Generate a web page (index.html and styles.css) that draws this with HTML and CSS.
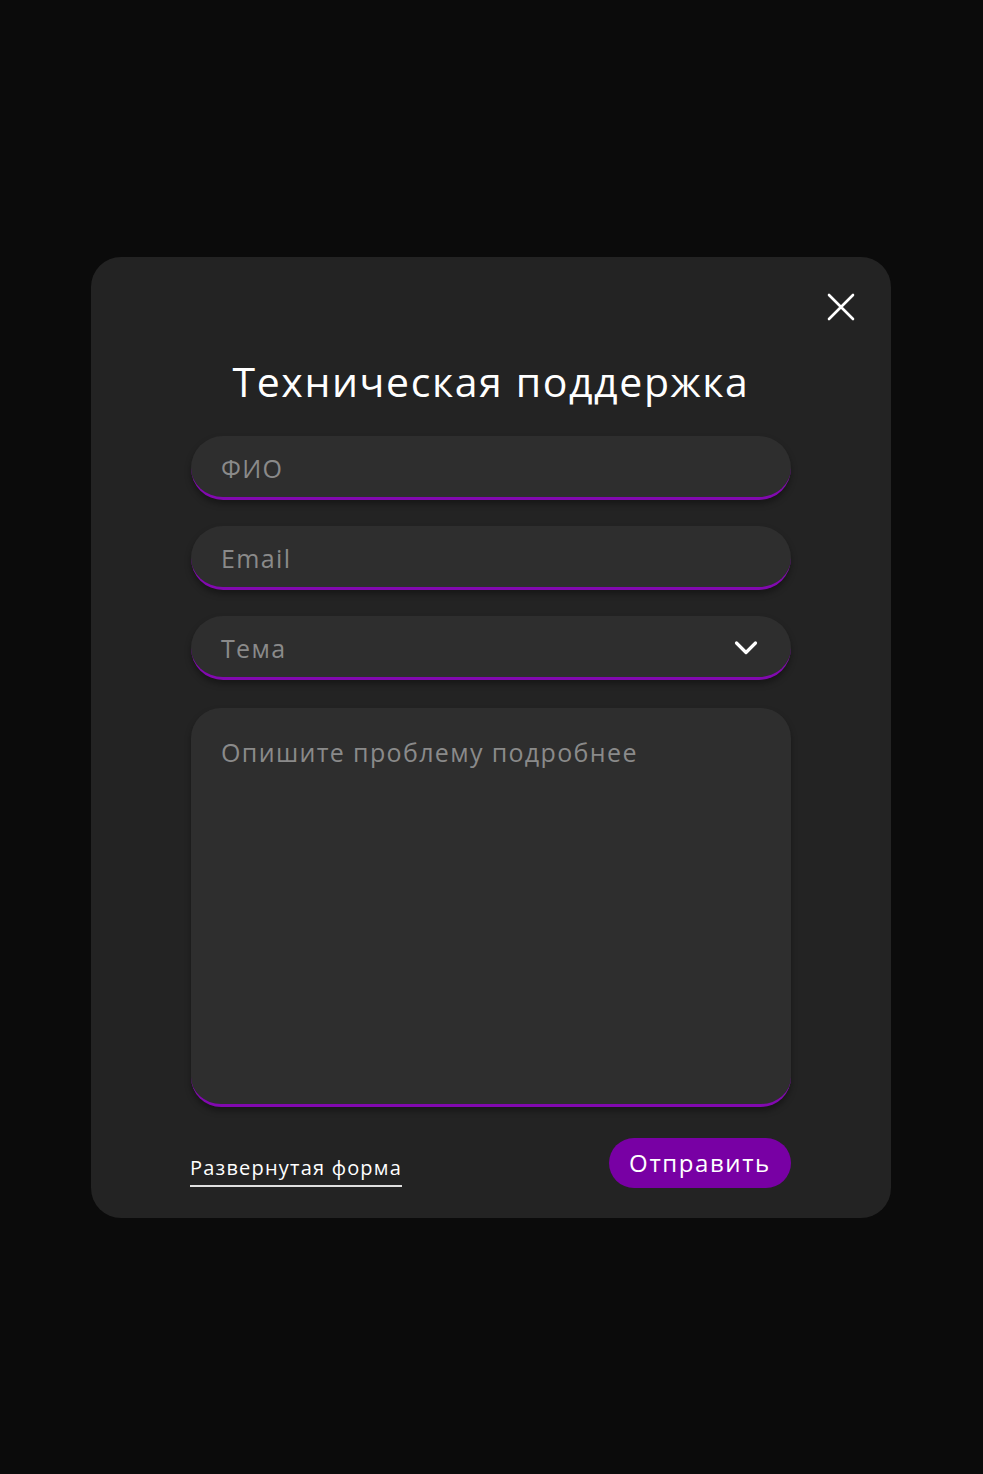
FILE: index.html
```html
<!DOCTYPE html>
<html lang="ru">
<head>
<meta charset="utf-8">
<link rel="stylesheet" href="styles.css">
</head>
<body>
<div class="card">
  <button class="close" aria-label="Закрыть">
    <svg width="28" height="28" viewBox="0 0 28 28"><path d="M2 2 L26 26 M26 2 L2 26" stroke="#fff" stroke-width="2.6" stroke-linecap="round" fill="none"/></svg>
  </button>
  <h1 class="title">Техническая поддержка</h1>
  <div class="form">
    <div class="field"><span class="ph">ФИО</span></div>
    <div class="field"><span class="ph">Email</span></div>
    <div class="field select"><span class="ph">Тема</span>
      <svg class="chev" width="24" height="16" viewBox="0 0 24 16"><path d="M2.5 3 L12 12.5 L21.5 3" stroke="#fff" stroke-width="3.2" stroke-linecap="round" stroke-linejoin="round" fill="none"/></svg>
    </div>
    <div class="field area"><span class="ph">Опишите проблему подробнее</span></div>
  </div>
  <div class="footer">
    <a class="link">Развернутая форма</a>
    <button class="send">Отправить</button>
  </div>
</div>
</body>
</html>
```
FILE: styles.css
```css
* { box-sizing: border-box; }
html, body { margin: 0; padding: 0; }
body {
  background: #0b0b0b;
  width: 983px;
  height: 1474px;
  font-family: "Open Sans", "Noto Sans", sans-serif;
  padding-top: 257px;
  padding-left: 91px;
}
.card {
  position: relative;
  width: 800px;
  height: 961px;
  background: #232323;
  border-radius: 30px;
  padding: 91px 100px 30px 100px;
  display: flex;
  flex-direction: column;
}
.close {
  position: absolute;
  top: 36px;
  right: 36px;
  width: 28px;
  height: 28px;
  padding: 0;
  border: 0;
  background: none;
  display: flex;
}
.title {
  margin: 0 -60px 22px;
  font-weight: 400;
  font-size: 41px;
  line-height: 66px;
  letter-spacing: 1.6px;
  text-align: center;
  color: #fff;
  white-space: nowrap;
}
.form {
  display: flex;
  flex-direction: column;
  gap: 26px;
}
.field {
  height: 64px;
  background: #2e2e2e;
  border-radius: 32px;
  border-bottom: 3px solid #8209b0;
  box-shadow: 0 4px 6px rgba(0, 0, 0, 0.35);
  padding: 3px 30px 0;
  display: flex;
  align-items: center;
  justify-content: space-between;
}
.ph {
  color: #8a8a8a;
  font-size: 25px;
  letter-spacing: 1.35px;
}
.area {
  height: 399px;
  margin-top: 2px;
  border-radius: 30px;
  align-items: flex-start;
  padding-top: 27px;
}
.chev { margin-right: 3px; margin-top: -1px; }
.footer {
  margin-top: 31px;
  display: flex;
  justify-content: space-between;
  align-items: flex-end;
}
.link {
  color: #fff;
  font-size: 20px;
  letter-spacing: 1.2px;
  line-height: 26px;
  padding-bottom: 4px;
  border-bottom: 2px solid #e0e0e0;
  margin-bottom: 1px;
  margin-left: -1px;
}
.send {
  width: 182px;
  height: 50px;
  border: 0;
  border-radius: 25px;
  background: #7800a4;
  color: #fff;
  font-family: inherit;
  font-size: 24px;
  letter-spacing: 1.6px;
  padding: 0 0 2px;
}
```
